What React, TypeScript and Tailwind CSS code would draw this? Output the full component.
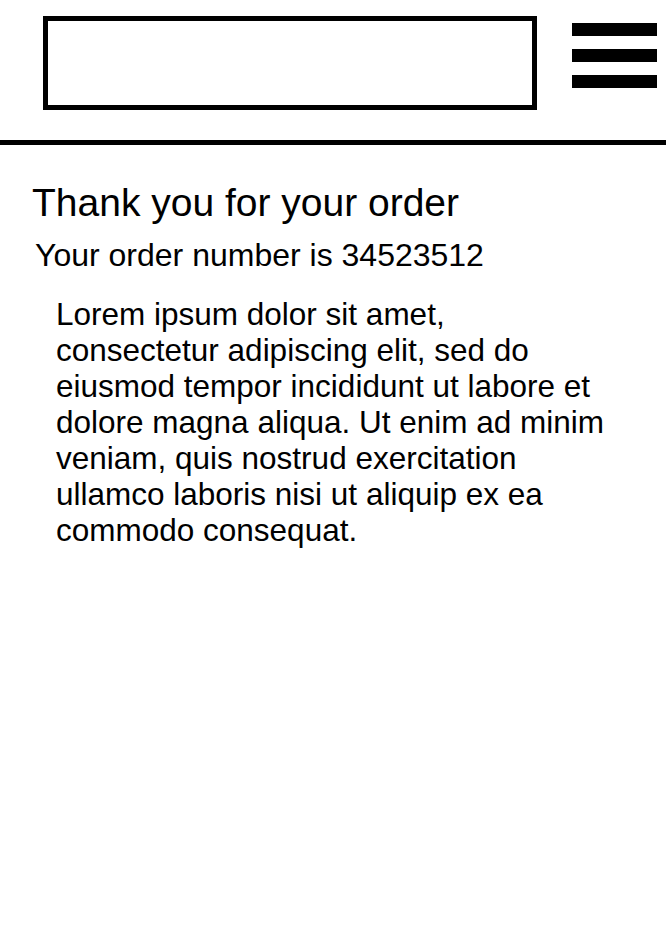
const App = () => {
  return (
    <div className="min-h-[951px] bg-white text-black font-['Liberation_Sans',Arial,sans-serif]">
      <header className="flex items-start border-b-[5px] border-black h-[145px]">
        <div className="ml-[43px] mt-[16px] w-[494px] h-[94px] border-[5px] border-black" />
        <div className="ml-[35px] mt-[23px] flex flex-col gap-[13px]">
          <div className="w-[85px] h-[13px] bg-black" />
          <div className="w-[85px] h-[13px] bg-black" />
          <div className="w-[85px] h-[13px] bg-black" />
        </div>
      </header>
      <main className="pt-[36px]">
        <h1 className="ml-[32px] text-[39px] leading-[44px]">Thank you for your order</h1>
        <p className="ml-[35px] mt-[12px] text-[32px] leading-[36px]">Your order number is 34523512</p>
        <p className="ml-[56px] mt-[23px] w-[560px] text-[31.5px] leading-[36px]">
          Lorem ipsum dolor sit amet, consectetur adipiscing elit, sed do eiusmod tempor incididunt ut
          labore et dolore magna aliqua. Ut enim ad minim veniam, quis nostrud exercitation ullamco
          laboris nisi ut aliquip ex ea commodo consequat.
        </p>
      </main>
    </div>
  );
};

export default App;
